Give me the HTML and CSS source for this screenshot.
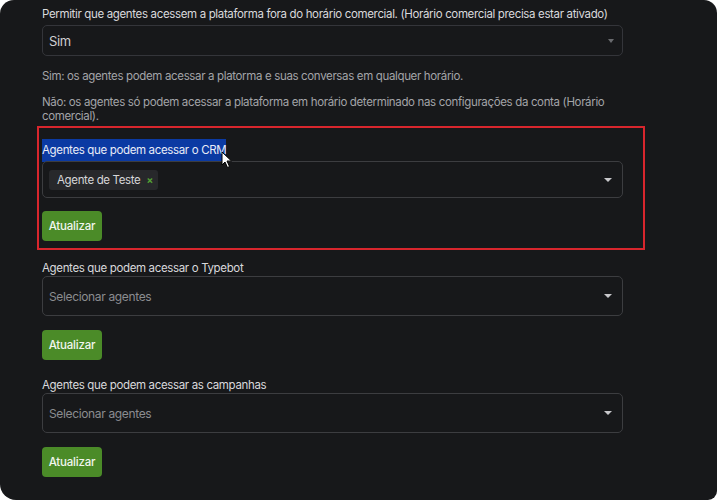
FILE: index.html
```html
<!DOCTYPE html>
<html lang="pt">
<head>
<meta charset="utf-8">
<link rel="stylesheet" href="styles.css">
</head>
<body>
<div class="panel">
  <div class="field first">
    <label class="label">Permitir que agentes acessem a plataforma fora do horário comercial. (Horário comercial precisa estar ativado)</label>
    <div class="select small">
      <span class="value">Sim</span>
      <span class="caret dim"></span>
    </div>
    <p class="help help1">Sim: os agentes podem acessar a platorma e suas conversas em qualquer horário.</p>
    <p class="help help2">Não: os agentes só podem acessar a plataforma em horário determinado nas configurações da conta (Horário comercial).</p>
  </div>

  <div class="highlight-box">
    <div class="field crm">
      <label class="label"><span class="selected">Agentes que podem acessar o CRM</span></label>
      <div class="select multi">
        <span class="tag">Agente de Teste <span class="tag-x">×</span></span>
        <span class="caret"></span>
      </div>
      <button class="btn">Atualizar</button>
    </div>
    <svg class="cursor" width="12" height="18" viewBox="0 0 12 18"><path d="M1 1 L1 14 L4 11 L6.5 16.5 L8.5 15.5 L6 10 L10.5 10 Z" fill="#ffffff" stroke="#000" stroke-width="1"/></svg>
  </div>

  <div class="field typebot">
    <label class="label">Agentes que podem acessar o Typebot</label>
    <div class="select tall">
      <span class="placeholder">Selecionar agentes</span>
      <span class="caret"></span>
    </div>
    <button class="btn">Atualizar</button>
  </div>

  <div class="field campaigns">
    <label class="label">Agentes que podem acessar as campanhas</label>
    <div class="select tall">
      <span class="placeholder">Selecionar agentes</span>
      <span class="caret"></span>
    </div>
    <button class="btn">Atualizar</button>
  </div>
</div>
</body>
</html>
```
FILE: styles.css
```css
html, body {
  margin: 0;
  padding: 0;
  background: #ffffff;
}
body {
  width: 717px;
  height: 500px;
  overflow: hidden;
  font-family: "Inter", "Noto Sans", sans-serif;
  letter-spacing: -0.35px;
}
.panel {
  width: 717px;
  height: 500px;
  box-sizing: border-box;
  background: #17181a;
  border-radius: 14px 13px 9px 16px;
  padding: 6px 94px 0 42px;
}
.field {
  display: flex;
  flex-direction: column;
  align-items: flex-start;
}
.label {
  font-size: 11.5px;
  line-height: 16px;
  color: #d9d9dc;
  margin-bottom: 0;
}
.first .label {
  margin-bottom: 3px;
}
.select {
  box-sizing: border-box;
  width: 581px;
  border: 1px solid #3c3d40;
  border-radius: 5px;
  display: flex;
  align-items: center;
  padding: 0 10px 0 6px;
  position: relative;
}
.select.small {
  height: 31px;
  border-color: #34353a;
  padding-right: 8px;
}
.select.tall {
  height: 40px;
}
.select.multi {
  height: 37px;
}
.value {
  font-size: 13px;
  color: #cfcfd2;
  flex: 1;
}
.placeholder {
  font-size: 12px;
  color: #8b8c90;
  flex: 1;
}
.caret {
  width: 0;
  height: 0;
  border-left: 4px solid transparent;
  border-right: 4px solid transparent;
  border-top: 4px solid #c8c8cb;
  margin-left: auto;
}
.caret.dim {
  border-left-width: 3px;
  border-right-width: 3px;
  border-top-color: #6a6b6f;
}
.help {
  margin: 0;
  font-size: 11.5px;
  line-height: 14px;
  color: #a3a4a8;
  width: 581px;
}
.help1 {
  margin-top: 13px;
}
.help2 {
  margin-top: 12px;
}
.highlight-box {
  margin: 3px 0 0 -5px;
  width: 608px;
  height: 124px;
  box-sizing: border-box;
  border: 2px solid #d8262d;
  padding: 14px 0 0 3px;
  position: relative;
}
.selected {
  background: #0b3aa3;
  color: #e8ecf7;
  padding: 4px 0 5px 0;
}
.crm .label {
  margin-bottom: 3px;
}
.tag {
  display: inline-flex;
  align-items: center;
  height: 20px;
  padding: 0 5px 0 8px;
  background: #27282b;
  border-radius: 3px;
  color: #d6d6d8;
  font-size: 11.5px;
  gap: 6px;
}
.tag-x {
  color: #53a034;
  font-size: 10px;
  font-weight: 700;
}
.btn {
  margin-top: 13px;
  height: 30px;
  width: 60px;
  padding: 0;
  border: none;
  border-radius: 4px;
  background: #4b8b28;
  color: #f2f6ef;
  font-family: "Inter", "Noto Sans", sans-serif;
  font-size: 11.5px;
  font-weight: 500;
  letter-spacing: -0.2px;
}
.tall + .btn {
  margin-top: 14px;
}
.cursor {
  position: absolute;
  left: 182px;
  top: 23px;
}
.typebot {
  margin-top: 10px;
}
.campaigns {
  margin-top: 17px;
}
```
